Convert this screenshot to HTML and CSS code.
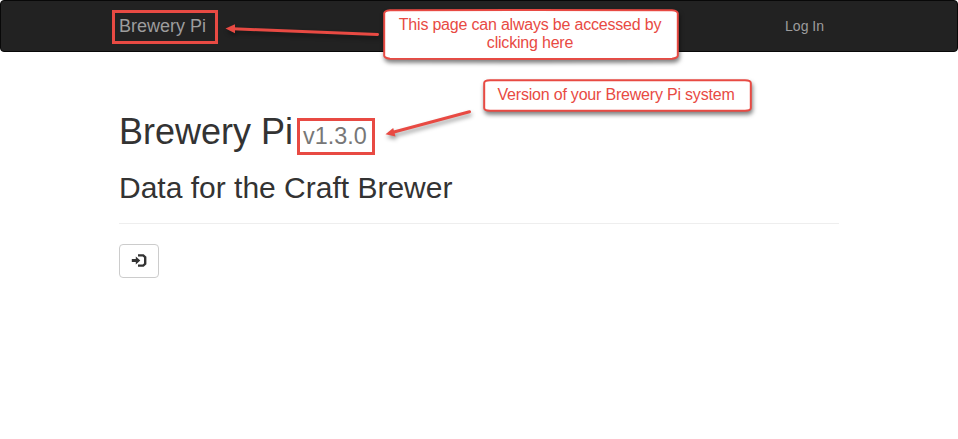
FILE: index.html
```html
<!DOCTYPE html>
<html lang="en">
<head>
<meta charset="utf-8">
<title>Brewery Pi</title>
<link rel="stylesheet" href="styles.css">
</head>
<body>
<nav class="navbar">
  <div class="container navbar-row">
    <a class="brand">Brewery Pi</a>
    <a class="login">Log In</a>
  </div>
</nav>
<main class="container">
  <header class="page-header">
    <h1>Brewery Pi <small>v1.3.0</small></h1>
    <h2>Data for the Craft Brewer</h2>
  </header>
  <button class="btn" aria-label="Log in">
    <svg width="16" height="14" viewBox="0 0 16 14">
      <path class="icon-fill" d="M.8 5h4V2.4L9.3 6.4 4.8 10.4V8H.8z"/>
      <path class="icon-line" d="M7 1.4h5.2l2 1.8v6.6l-2 1.8H7"/>
    </svg>
  </button>
</main>
<div class="mark mark-brand"></div>
<div class="mark mark-version"></div>
<svg class="arrows" width="958" height="439" viewBox="0 0 958 439">
  <g class="arrow">
    <path class="shaft" d="M233 28.8L377.5 34.5"/>
    <path class="head" d="M225.5 28.6L235 24.2V33.3z"/>
  </g>
  <g class="arrow">
    <path class="shaft" d="M393 132.2L469.5 111.7"/>
    <path class="head" d="M385.5 134.3L393.2 128.1L395.5 136.6z"/>
  </g>
</svg>
<div class="callout callout-brand"><svg class="frame" viewBox="0 0 296 51"><path d="M7 1.3Q148 .7 289 1.3Q294.8 2 294.8 4.5V46.5Q294.8 49 289 49.7Q148 50.3 7 49.7Q1.2 49 1.2 46.5V4.5Q1.2 2 7 1.3z"/></svg><p>This page can always be accessed by<br>clicking here</p></div>
<div class="callout callout-version"><svg class="frame" viewBox="0 0 269 33"><path d="M7 1.2Q134 .8 262 1.2Q267.8 1.5 267.8 4V29Q267.8 31.5 262 31.8Q134 32.2 7 31.8Q1.2 31.5 1.2 29V4Q1.2 1.5 7 1.2z"/></svg><p>Version of your Brewery Pi system</p></div>
</body>
</html>
```
FILE: styles.css
```css
* { box-sizing: border-box; }
body {
  margin: 0;
  background: #fff;
  color: #333;
  font: 14px/20px "Liberation Sans", Arial, sans-serif;
}
.navbar {
  height: 52px;
  background: #222;
  border: 1px solid #080808;
  border-radius: 4px;
}
.container { width: 720px; margin: 0 auto; }
.navbar-row { display: flex; justify-content: space-between; }
.brand, .login { padding: 15px 0; color: #9d9d9d; }
.brand { font-size: 18px; }
.login { padding-right: 15px; }
.page-header {
  margin: 60px 0 20px;
  padding-bottom: 9px;
  border-bottom: 1px solid #eee;
}
h1, h2 { margin: 0 0 10px; font-weight: 400; line-height: 1.1; }
h1 { font-size: 36px; margin-bottom: 19px; }
h2 { font-size: 30px; }
h1 small { font-size: 65%; line-height: 1; color: #777; }
.btn {
  display: flex;
  align-items: center;
  justify-content: center;
  width: 40px;
  height: 34px;
  padding: 0;
  background: #fff;
  border: 1px solid #ccc;
  border-radius: 4px;
}
.icon-fill { fill: #333; }
.icon-line { fill: none; stroke: #333; stroke-width: 2.4; }
.mark { position: absolute; border: 3px solid #e84a43; }
.mark-brand { left: 112px; top: 10px; width: 106px; height: 34px; }
.mark-version { left: 297px; top: 118px; width: 78px; height: 37px; }
.arrows { position: absolute; left: 0; top: 0; pointer-events: none; }
.arrow { filter: drop-shadow(1px 3px 2px rgba(0, 0, 0, .4)); }
.shaft { stroke: #e84a43; stroke-width: 3; stroke-linecap: round; }
.head { fill: #e84a43; }
.callout {
  position: absolute;
  color: #e84a43;
  font-size: 16px;
  line-height: 18px;
  letter-spacing: -.2px;
  text-align: center;
  white-space: nowrap;
}
.callout p { position: relative; margin: 0; }
.callout-brand { left: 383px; top: 9px; width: 296px; height: 51px; padding-top: 7px; padding-right: 2px; }
.callout-version { left: 483px; top: 79px; width: 269px; height: 33px; padding-top: 7px; padding-right: 3px; }
.frame {
  position: absolute;
  left: 0;
  top: 0;
  width: 100%;
  height: 100%;
  overflow: visible;
  fill: #fff;
  stroke: #e84a43;
  stroke-width: 2;
  filter: drop-shadow(1px 3px 2px rgba(0, 0, 0, .5));
}
```
